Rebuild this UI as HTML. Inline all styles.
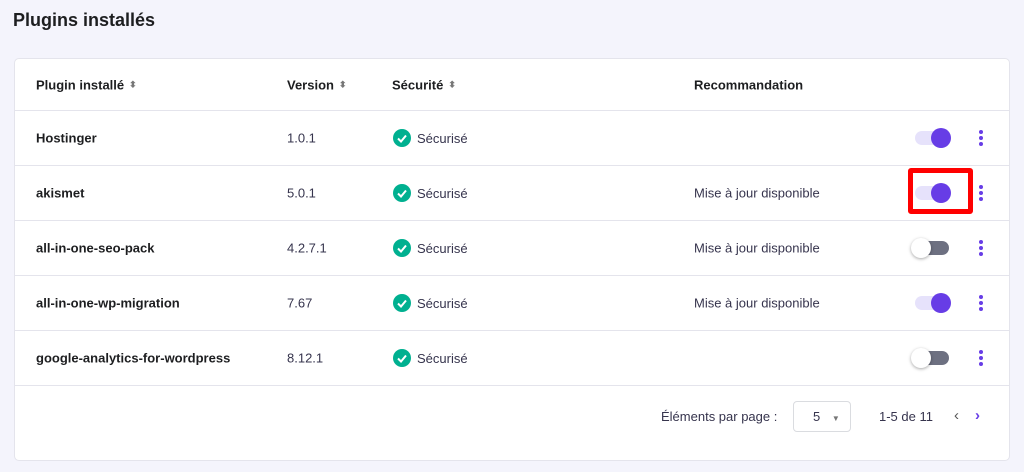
<!DOCTYPE html>
<html><head><meta charset="utf-8"><style>
*{box-sizing:border-box;margin:0;padding:0}
body{width:1024px;height:472px;background:#f4f4fc;font-family:"Liberation Sans",sans-serif;color:#2f1c6a;position:relative;overflow:hidden}
h1{position:absolute;left:13px;top:10px;font-size:18px;font-weight:bold;color:#1d1e20}
.card{position:absolute;left:14px;top:58px;width:996px;height:403px;background:#fff;border:1px solid #e4e4ec;border-radius:5px}
.row{position:absolute;left:0;width:994px;height:55px;border-bottom:1px solid #e4e4ec;font-size:13px;color:#36344d}
.row>span{position:absolute;top:50%;transform:translateY(-50%);display:flex;align-items:center}
.hd{top:0;height:52px;font-weight:bold;color:#1d1e20}
.b{font-weight:bold;color:#1d1e20}
.arr{font-size:9px;color:#777;margin-left:5px}
.chk{width:18px;height:18px;border-radius:50%;background:#00b090;display:inline-block;position:relative;margin-right:6px}
.tg{position:absolute;left:900px;top:50%;transform:translateY(-50%);width:34px;height:14px;border-radius:7px}
.on{background:#e6e2fb}.on i{position:absolute;right:-2px;top:-3px;width:20px;height:20px;border-radius:50%;background:#673de6}
.off{background:#6d7081}.off i{position:absolute;left:-4px;top:-3px;width:20px;height:20px;border-radius:50%;background:#fff;box-shadow:0 1px 3px rgba(0,0,0,.35)}
.dots{position:absolute;left:964px;top:50%;transform:translateY(-50%);width:4px}
.dots b{display:block;width:4px;height:4px;border-radius:50%;background:#673de6;margin:2px 0}
</style></head><body>
<h1>Plugins installés</h1>
<div class="card">
<div class="row hd"><span style="left:21px">Plugin installé<span class="arr">⬍</span></span><span style="left:272px">Version<span class="arr">⬍</span></span><span style="left:377px">Sécurité<span class="arr">⬍</span></span><span style="left:679px">Recommandation</span></div>

<div class="row" style="top:52px"><span class="b" style="left:21px">Hostinger</span><span style="left:272px">1.0.1</span><span style="left:378px"><i class="chk"><svg width="18" height="18"><path d="M5 9.5l3 3 5-6" stroke="#fff" stroke-width="2" fill="none"/></svg></i>Sécurisé</span><div class="tg on"><i></i></div><div class="dots"><b></b><b></b><b></b></div></div>
<div class="row" style="top:107px"><span class="b" style="left:21px">akismet</span><span style="left:272px">5.0.1</span><span style="left:378px"><i class="chk"><svg width="18" height="18"><path d="M5 9.5l3 3 5-6" stroke="#fff" stroke-width="2" fill="none"/></svg></i>Sécurisé</span><span style="left:679px">Mise à jour disponible</span><div class="tg on"><i></i></div><div class="dots"><b></b><b></b><b></b></div>
<div style="position:absolute;left:893px;top:2px;width:65px;height:46px;border:5px solid #f00;border-radius:3px"></div></div>
<div class="row" style="top:162px"><span class="b" style="left:21px">all-in-one-seo-pack</span><span style="left:272px">4.2.7.1</span><span style="left:378px"><i class="chk"><svg width="18" height="18"><path d="M5 9.5l3 3 5-6" stroke="#fff" stroke-width="2" fill="none"/></svg></i>Sécurisé</span><span style="left:679px">Mise à jour disponible</span><div class="tg off"><i></i></div><div class="dots"><b></b><b></b><b></b></div></div>
<div class="row" style="top:217px"><span class="b" style="left:21px">all-in-one-wp-migration</span><span style="left:272px">7.67</span><span style="left:378px"><i class="chk"><svg width="18" height="18"><path d="M5 9.5l3 3 5-6" stroke="#fff" stroke-width="2" fill="none"/></svg></i>Sécurisé</span><span style="left:679px">Mise à jour disponible</span><div class="tg on"><i></i></div><div class="dots"><b></b><b></b><b></b></div></div>
<div class="row" style="top:272px"><span class="b" style="left:21px">google-analytics-for-wordpress</span><span style="left:272px">8.12.1</span><span style="left:378px"><i class="chk"><svg width="18" height="18"><path d="M5 9.5l3 3 5-6" stroke="#fff" stroke-width="2" fill="none"/></svg></i>Sécurisé</span><div class="tg off"><i></i></div><div class="dots"><b></b><b></b><b></b></div></div>

<div style="position:absolute;left:646px;top:350px;font-size:13px;color:#36344d">Éléments par page :</div>
<div style="position:absolute;left:778px;top:342px;width:58px;height:31px;border:1px solid #dadce0;border-radius:4px;font-size:13px;color:#36344d;padding:7px 0 0 19px">5 <span style="font-size:8px;color:#777;margin-left:8px">▼</span></div>
<div style="position:absolute;left:864px;top:350px;font-size:13px;color:#36344d">1-5 de 11</div>
<div style="position:absolute;left:939px;top:348px;font-size:15px;color:#555">‹</div>
<div style="position:absolute;left:960px;top:348px;font-size:15px;color:#673de6;font-weight:bold">›</div>
</div>
</body></html>
